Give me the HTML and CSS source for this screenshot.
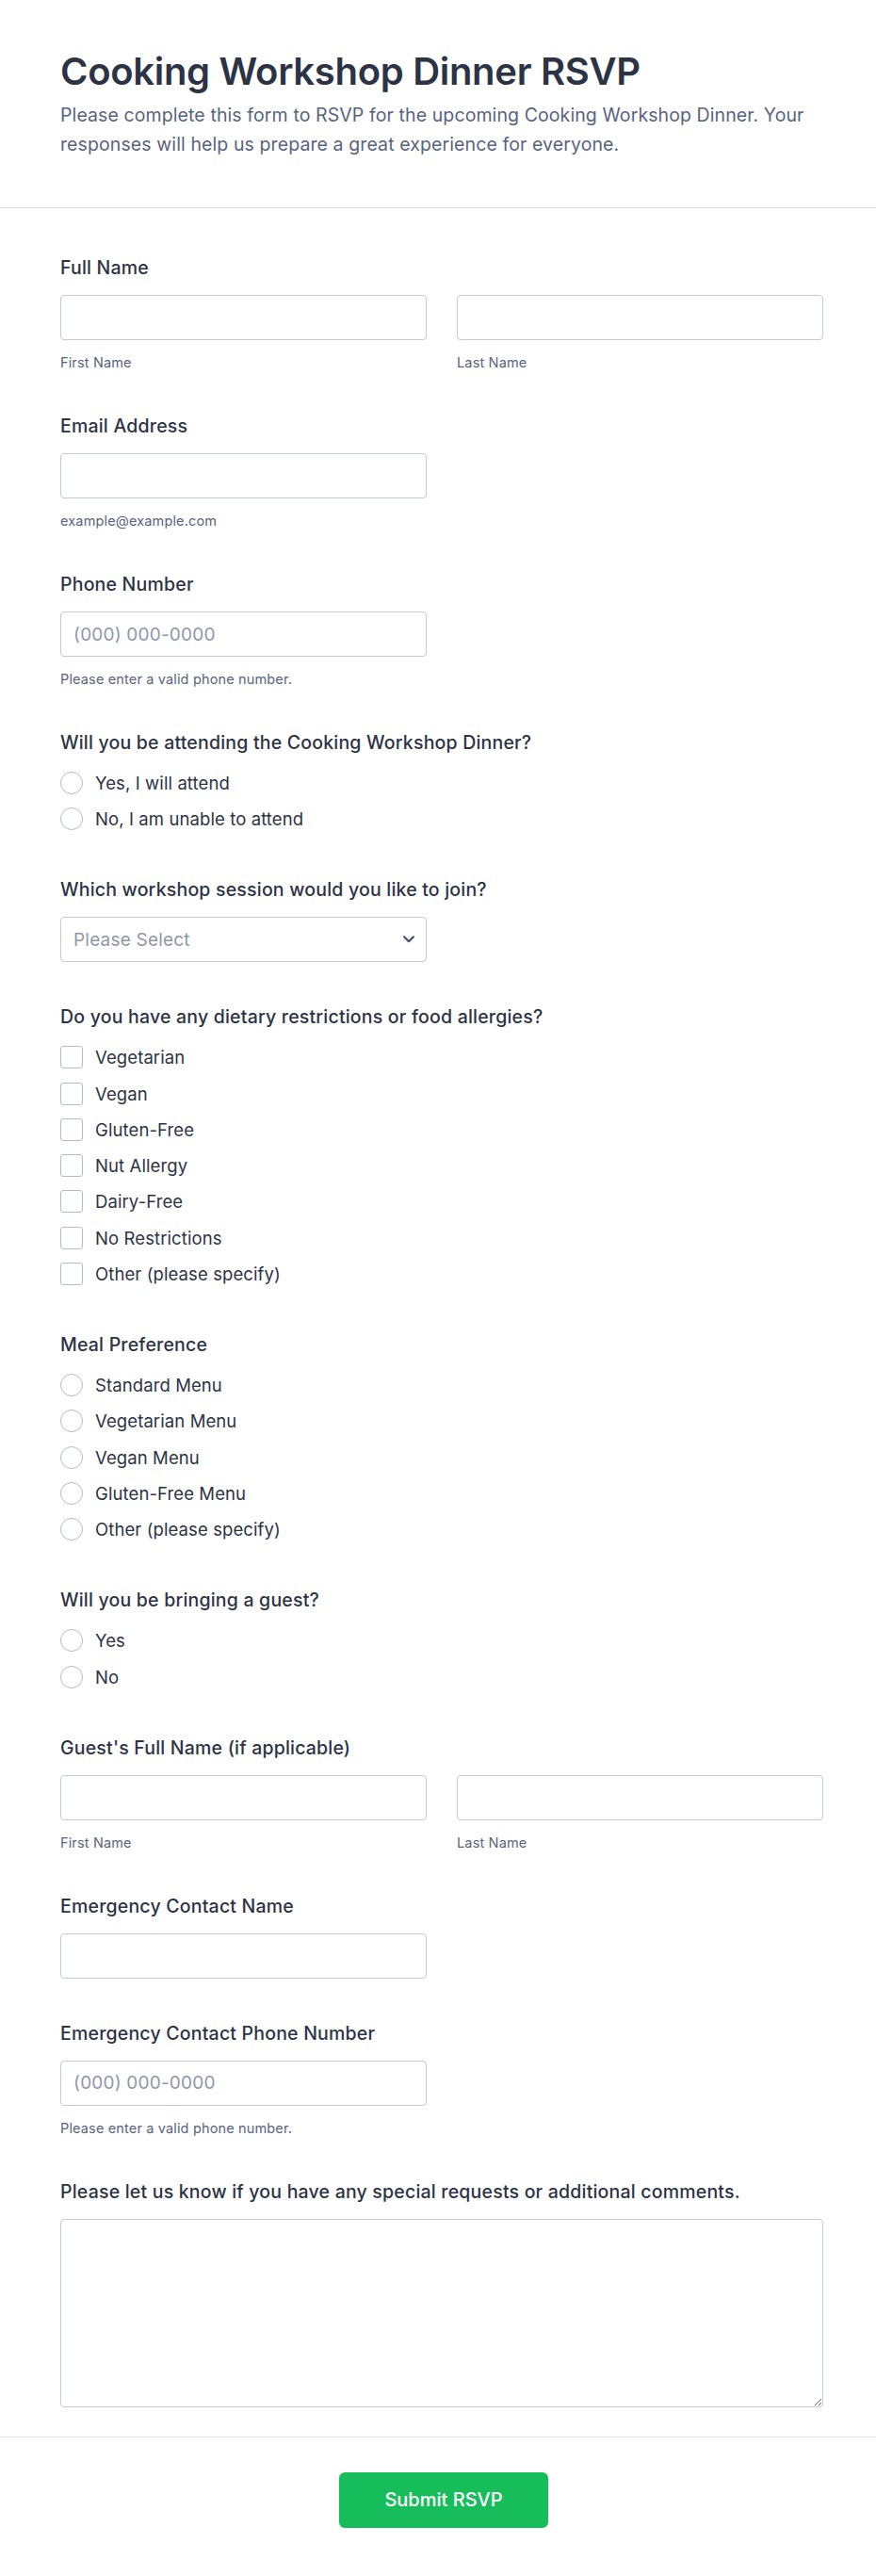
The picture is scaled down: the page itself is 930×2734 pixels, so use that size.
FILE: index.html
```html
<!DOCTYPE html>
<html lang="en">
<head>
<meta charset="utf-8">
<title>Cooking Workshop Dinner RSVP</title>
<link rel="stylesheet" href="styles.css">
</head>
<body>
<header class="header">
  <h1 class="title">Cooking Workshop Dinner RSVP</h1>
  <p class="desc">Please complete this form to RSVP for the upcoming Cooking Workshop Dinner. Your responses will help us prepare a great experience for everyone.</p>
</header>

<form class="form">
  <div class="field">
    <div class="label">Full Name</div>
    <div class="row2">
      <div>
        <input class="input" type="text">
        <div class="sub">First Name</div>
      </div>
      <div>
        <input class="input" type="text">
        <div class="sub">Last Name</div>
      </div>
    </div>
  </div>

  <div class="field">
    <div class="label">Email Address</div>
    <div class="row2">
      <div>
        <input class="input" type="email">
        <div class="sub">example@example.com</div>
      </div>
    </div>
  </div>

  <div class="field">
    <div class="label">Phone Number</div>
    <div class="row2">
      <div>
        <input class="input" type="tel" placeholder="(000) 000-0000">
        <div class="sub">Please enter a valid phone number.</div>
      </div>
    </div>
  </div>

  <div class="field">
    <div class="label">Will you be attending the Cooking Workshop Dinner?</div>
    <div class="options">
      <label class="opt"><input type="radio" name="attend" class="radio"><span>Yes, I will attend</span></label>
      <label class="opt"><input type="radio" name="attend" class="radio"><span>No, I am unable to attend</span></label>
    </div>
  </div>

  <div class="field">
    <div class="label">Which workshop session would you like to join?</div>
    <div class="row2">
      <div class="select-wrap">
        <select class="input select">
          <option>Please Select</option>
        </select>
        <svg class="chev" width="12" height="8" viewBox="0 0 12 8"><path d="M1.2 1.4 L6 6.2 L10.8 1.4" fill="none" stroke="#4b5572" stroke-width="2.2" stroke-linecap="round" stroke-linejoin="round"/></svg>
      </div>
    </div>
  </div>

  <div class="field">
    <div class="label">Do you have any dietary restrictions or food allergies?</div>
    <div class="options">
      <label class="opt"><input type="checkbox" class="check"><span>Vegetarian</span></label>
      <label class="opt"><input type="checkbox" class="check"><span>Vegan</span></label>
      <label class="opt"><input type="checkbox" class="check"><span>Gluten-Free</span></label>
      <label class="opt"><input type="checkbox" class="check"><span>Nut Allergy</span></label>
      <label class="opt"><input type="checkbox" class="check"><span>Dairy-Free</span></label>
      <label class="opt"><input type="checkbox" class="check"><span>No Restrictions</span></label>
      <label class="opt"><input type="checkbox" class="check"><span>Other (please specify)</span></label>
    </div>
  </div>

  <div class="field">
    <div class="label">Meal Preference</div>
    <div class="options">
      <label class="opt"><input type="radio" name="meal" class="radio"><span>Standard Menu</span></label>
      <label class="opt"><input type="radio" name="meal" class="radio"><span>Vegetarian Menu</span></label>
      <label class="opt"><input type="radio" name="meal" class="radio"><span>Vegan Menu</span></label>
      <label class="opt"><input type="radio" name="meal" class="radio"><span>Gluten-Free Menu</span></label>
      <label class="opt"><input type="radio" name="meal" class="radio"><span>Other (please specify)</span></label>
    </div>
  </div>

  <div class="field">
    <div class="label">Will you be bringing a guest?</div>
    <div class="options">
      <label class="opt"><input type="radio" name="guest" class="radio"><span>Yes</span></label>
      <label class="opt"><input type="radio" name="guest" class="radio"><span>No</span></label>
    </div>
  </div>

  <div class="field">
    <div class="label">Guest's Full Name (if applicable)</div>
    <div class="row2">
      <div>
        <input class="input" type="text">
        <div class="sub">First Name</div>
      </div>
      <div>
        <input class="input" type="text">
        <div class="sub">Last Name</div>
      </div>
    </div>
  </div>

  <div class="field">
    <div class="label">Emergency Contact Name</div>
    <div class="row2">
      <div>
        <input class="input" type="text">
      </div>
    </div>
  </div>

  <div class="field">
    <div class="label">Emergency Contact Phone Number</div>
    <div class="row2">
      <div>
        <input class="input" type="tel" placeholder="(000) 000-0000">
        <div class="sub">Please enter a valid phone number.</div>
      </div>
    </div>
  </div>

  <div class="field last">
    <div class="label">Please let us know if you have any special requests or additional comments.</div>
    <textarea class="textarea"></textarea>
  </div>
</form>

<footer class="footer">
  <button class="submit" type="button">Submit RSVP</button>
</footer>
</body>
</html>
```

FILE: styles.css
```css
* {
  box-sizing: border-box;
}

body {
  margin: 0;
  background: #ffffff;
  color: #2c3345;
  font-family: Inter, "Noto Sans", "Liberation Sans", sans-serif;
}

.header {
  padding: 52px 56px 51px 64px;
  border-bottom: 1px solid #dcdfe8;
}

.title {
  margin: 0;
  font-size: 40px;
  line-height: 48px;
  font-weight: 600;
  letter-spacing: -0.3px;
  color: #2c3345;
}

.desc {
  margin: 7px 0 0;
  font-size: 19.5px;
  line-height: 31px;
  letter-spacing: 0.1px;
  color: #57647e;
}

.form {
  padding: 51px 56px 0 64px;
}

.field {
  margin-bottom: 46px;
}

.field.last {
  margin-bottom: 0;
}

.label {
  font-size: 19.5px;
  line-height: 24px;
  font-weight: 500;
  letter-spacing: 0.2px;
  color: #2c3345;
  margin-bottom: 17px;
}

.row2 {
  display: grid;
  grid-template-columns: 389px 389px;
  column-gap: 32px;
}

.input {
  display: block;
  width: 100%;
  height: 48px;
  margin: 0;
  padding: 0 13px;
  border: 1px solid #c3c8d4;
  border-radius: 4px;
  background: #ffffff;
  font-family: inherit;
  font-size: 19px;
  letter-spacing: 0.2px;
  color: #2c3345;
  outline: none;
}

.input::placeholder {
  color: #8d97ab;
}

.select {
  appearance: none;
  -webkit-appearance: none;
  color: #8d97ab;
}

.select-wrap {
  position: relative;
}

.chev {
  position: absolute;
  right: 13px;
  top: 20px;
  pointer-events: none;
}

.sub {
  margin-top: 15px;
  font-size: 14.5px;
  line-height: 18px;
  letter-spacing: 0.15px;
  color: #57647e;
}

.options {
  display: flex;
  flex-direction: column;
  gap: 14.3px;
  padding: 2px 0 5px;
}

.opt {
  display: flex;
  align-items: center;
  gap: 13px;
  height: 24px;
  font-size: 18.5px;
  line-height: 24px;
  letter-spacing: 0.1px;
  color: #2c3345;
}

.radio,
.check {
  appearance: none;
  -webkit-appearance: none;
  width: 24px;
  height: 24px;
  margin: 0;
  flex: none;
  border: 1px solid #b3bac8;
  background: #ffffff;
}

.radio {
  border-radius: 50%;
}

.check {
  border-radius: 3px;
}

.textarea {
  display: block;
  width: 100%;
  height: 200px;
  margin: 0;
  border: 1px solid #c3c8d4;
  border-radius: 4px;
  font-family: inherit;
  font-size: 18px;
  padding: 12px 13px;
  outline: none;
}

.footer {
  margin-top: 31px;
  border-top: 1px solid #e3e5ec;
  padding: 37px 52px 50px 64px;
  display: flex;
  justify-content: center;
}

.submit {
  width: 222px;
  height: 59px;
  border: none;
  border-radius: 6px;
  background: #18bd5b;
  color: #ffffff;
  font-family: inherit;
  font-size: 20px;
  font-weight: 500;
  cursor: pointer;
}
```
